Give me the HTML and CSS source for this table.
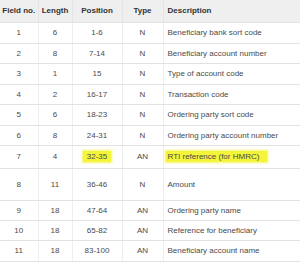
FILE: index.html
```html
<!DOCTYPE html>
<html>
<head>
<meta charset="utf-8">
<link rel="stylesheet" href="styles.css">
</head>
<body>
<table class="spec">
  <colgroup>
    <col class="c-field"><col class="c-len"><col class="c-pos"><col class="c-type"><col class="c-desc">
  </colgroup>
  <thead>
    <tr class="head"><th>Field no.</th><th>Length</th><th>Position</th><th>Type</th><th class="left">Description</th></tr>
  </thead>
  <tbody>
    <tr class="r21"><td>1</td><td>6</td><td>1-6</td><td>N</td><td class="left">Beneficiary bank sort code</td></tr>
    <tr class="r20"><td>2</td><td>8</td><td>7-14</td><td>N</td><td class="left">Beneficiary account number</td></tr>
    <tr class="r21"><td>3</td><td>1</td><td>15</td><td>N</td><td class="left">Type of account code</td></tr>
    <tr class="r20"><td>4</td><td>2</td><td>16-17</td><td>N</td><td class="left">Transaction code</td></tr>
    <tr class="r21"><td>5</td><td>6</td><td>18-23</td><td>N</td><td class="left">Ordering party sort code</td></tr>
    <tr class="r20"><td>6</td><td>8</td><td>24-31</td><td>N</td><td class="left">Ordering party account number</td></tr>
    <tr class="r23"><td>7</td><td>4</td><td><span class="hl">32-35</span></td><td>AN</td><td class="left"><span class="hl hl-wide">RTI reference (for HMRC)</span></td></tr>
    <tr class="r32"><td>8</td><td>11</td><td>36-46</td><td>N</td><td class="left">Amount</td></tr>
    <tr class="r20"><td>9</td><td>18</td><td>47-64</td><td>AN</td><td class="left">Ordering party name</td></tr>
    <tr class="r20"><td>10</td><td>18</td><td>65-82</td><td>AN</td><td class="left">Reference for beneficiary</td></tr>
    <tr class="r21"><td>11</td><td>18</td><td>83-100</td><td>AN</td><td class="left">Beneficiary account name</td></tr>
  </tbody>
</table>
</body>
</html>
```
FILE: styles.css
```css
html, body {
  margin: 0;
  padding: 0;
  background: #ffffff;
}
.spec {
  border-collapse: collapse;
  table-layout: fixed;
  width: 300px;
  font-family: "Liberation Sans", Arial, sans-serif;
  font-size: 8px;
  color: #4a4a4a;
}
.c-field { width: 38px; }
.c-len { width: 34px; }
.c-pos { width: 50px; }
.c-type { width: 41px; }
.c-desc { width: 137px; }
.spec th, .spec td {
  padding: 0;
  text-align: center;
  vertical-align: middle;
  border-bottom: 1px solid #e2e2e2;
  border-right: 1px solid #eeeeee;
  white-space: nowrap;
  overflow: hidden;
}
.spec th:last-child, .spec td:last-child {
  border-right: none;
}
.spec .left {
  text-align: left;
  padding-left: 4px;
}
.head {
  height: 22px;
  background: #efefef;
}
.head th {
  font-weight: bold;
  color: #333333;
  border-right-color: #e4e4e4;
}
.r20 { height: 20px; }
.r21 { height: 21px; }
.r23 { height: 23px; }
.r32 { height: 32px; }
.hl {
  background: #f4f43a;
  padding: 1px 4px;
  box-shadow: 0 0 2px 1px #f4f46a;
}
.hl-wide {
  margin-left: -2px;
  padding: 1px 8px 1px 2px;
}
```
